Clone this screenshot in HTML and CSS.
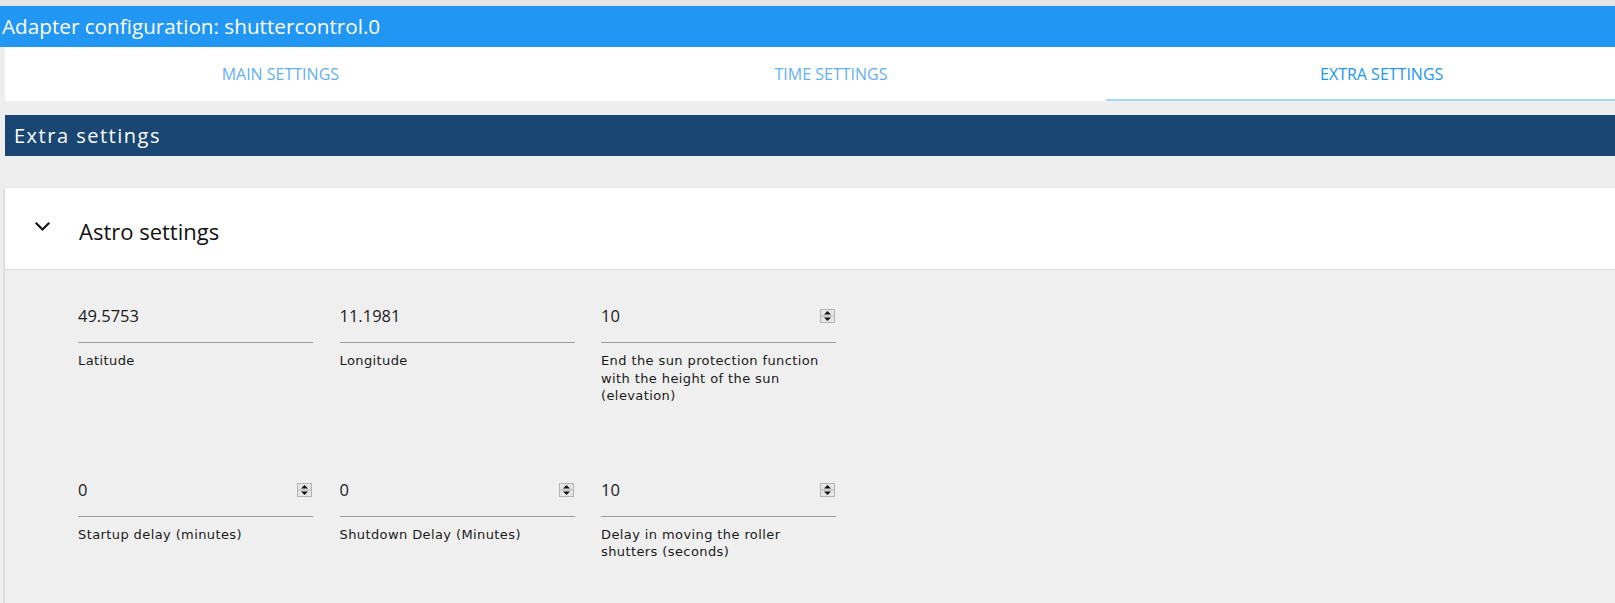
FILE: index.html
```html
<!DOCTYPE html>
<html>
<head>
    <title>Adapter configuration: shuttercontrol.0</title>
    <link rel="stylesheet" href="styles.css">
</head>
<body>
    <div class="topstrip"></div>
    <div class="appbar">Adapter configuration: shuttercontrol.0</div>

    <div class="page">
        <div class="tabs">
            <div class="tab">MAIN SETTINGS</div>
            <div class="tab">TIME SETTINGS</div>
            <div class="tab active">EXTRA SETTINGS</div>
        </div>

        <div class="section-bar">Extra settings</div>

        <div class="card">
            <div class="card-header">
                <svg class="chevron" width="15" height="9" viewBox="0 0 15 9">
                    <path d="M1.5 0 L7.5 6 L13.5 0 L15 1.5 L7.5 9 L0 1.5 Z" fill="#111"/>
                </svg>
                <span class="card-title">Astro settings</span>
            </div>
            <div class="card-body">
                <div class="fields" id="fields"></div>
            </div>
        </div>
    </div>

    <script>
        const fields = [
            { value: '49.5753', label: 'Latitude', spin: false },
            { value: '11.1981', label: 'Longitude', spin: false },
            { value: '10', label: 'End the sun protection function with the height of the sun (elevation)', spin: true },
            { value: '0', label: 'Startup delay (minutes)', spin: true },
            { value: '0', label: 'Shutdown Delay (Minutes)', spin: true },
            { value: '10', label: 'Delay in moving the roller shutters (seconds)', spin: true }
        ];

        const spinner = `
            <svg class="spin" width="15" height="14" viewBox="0 0 15 14">
                <rect x="0.5" y="0.5" width="14" height="13" fill="#e6e6e6" stroke="#b4b4b4"/>
                <line x1="1" y1="7" x2="14" y2="7" stroke="#b4b4b4"/>
                <path d="M4 5.5 L7.5 2 L11 5.5 Z" fill="#111"/>
                <path d="M4 8.5 L7.5 12 L11 8.5 Z" fill="#111"/>
            </svg>`;

        const container = document.getElementById('fields');
        fields.forEach(f => {
            const div = document.createElement('div');
            div.className = 'field';
            div.innerHTML = `
                <div class="field-input">
                    <span>${f.value}</span>
                    ${f.spin ? spinner : ''}
                </div>
                <div class="field-label">${f.label}</div>
            `;
            container.appendChild(div);
        });
    </script>
</body>
</html>
```

FILE: styles.css
```css
body {
    margin: 0;
    background-color: #eeeeee;
    font-family: "Open Sans", sans-serif;
    overflow: hidden;
}
.topstrip {
    height: 6px;
    background-color: #e6e6e6;
}
.appbar {
    height: 41px;
    line-height: 40px;
    padding-left: 2px;
    background-color: #2196f3;
    color: white;
    font-size: 20.7px;
    white-space: nowrap;
}
.page {
    margin-left: 5px;
    width: 1652px;
}
.tabs {
    display: flex;
    background-color: white;
}
.tab {
    width: 551px;
    height: 52px;
    line-height: 54px;
    text-align: center;
    font-size: 16px;
    color: #64b0f4;
    border-bottom: 2px solid transparent;
}
.tab.active {
    color: #2196f3;
    border-bottom-color: #a5d6f7;
}
.section-bar {
    margin-top: 14px;
    height: 41px;
    line-height: 41px;
    padding-left: 9px;
    background-color: #1a4674;
    color: white;
    font-size: 20px;
    letter-spacing: 1.5px;
}
.card {
    margin-top: 32px;
    background-color: white;
    box-shadow: 0 1px 3px rgba(0, 0, 0, 0.2), 0 1px 1px rgba(0, 0, 0, 0.12);
}
.card-header {
    height: 81px;
    display: flex;
    align-items: center;
    border-bottom: 1px solid #dcdcdc;
}
.chevron {
    margin-left: 30px;
    margin-right: 29px;
    margin-bottom: 5px;
}
.card-title {
    font-size: 22px;
    color: #111;
    margin-top: 5px;
}
.card-body {
    background-color: #efefef;
    padding: 30px 0 0 73px;
    min-height: 320px;
}
.fields {
    display: grid;
    grid-template-columns: repeat(3, 235px);
    column-gap: 26.5px;
    row-gap: 69px;
}
.field-input {
    display: flex;
    justify-content: space-between;
    align-items: center;
    padding: 6px 0 16px;
    line-height: 20px;
    font-size: 16.5px;
    color: #1a1a1a;
    border-bottom: 1px solid #9e9e9e;
}
.spin {
    margin-right: 1px;
}
.field-label {
    margin-top: 9px;
    font-family: "DejaVu Sans", sans-serif;
    font-size: 13px;
    letter-spacing: 0.4px;
    line-height: 17.5px;
    color: #1a1a1a;
}
```
